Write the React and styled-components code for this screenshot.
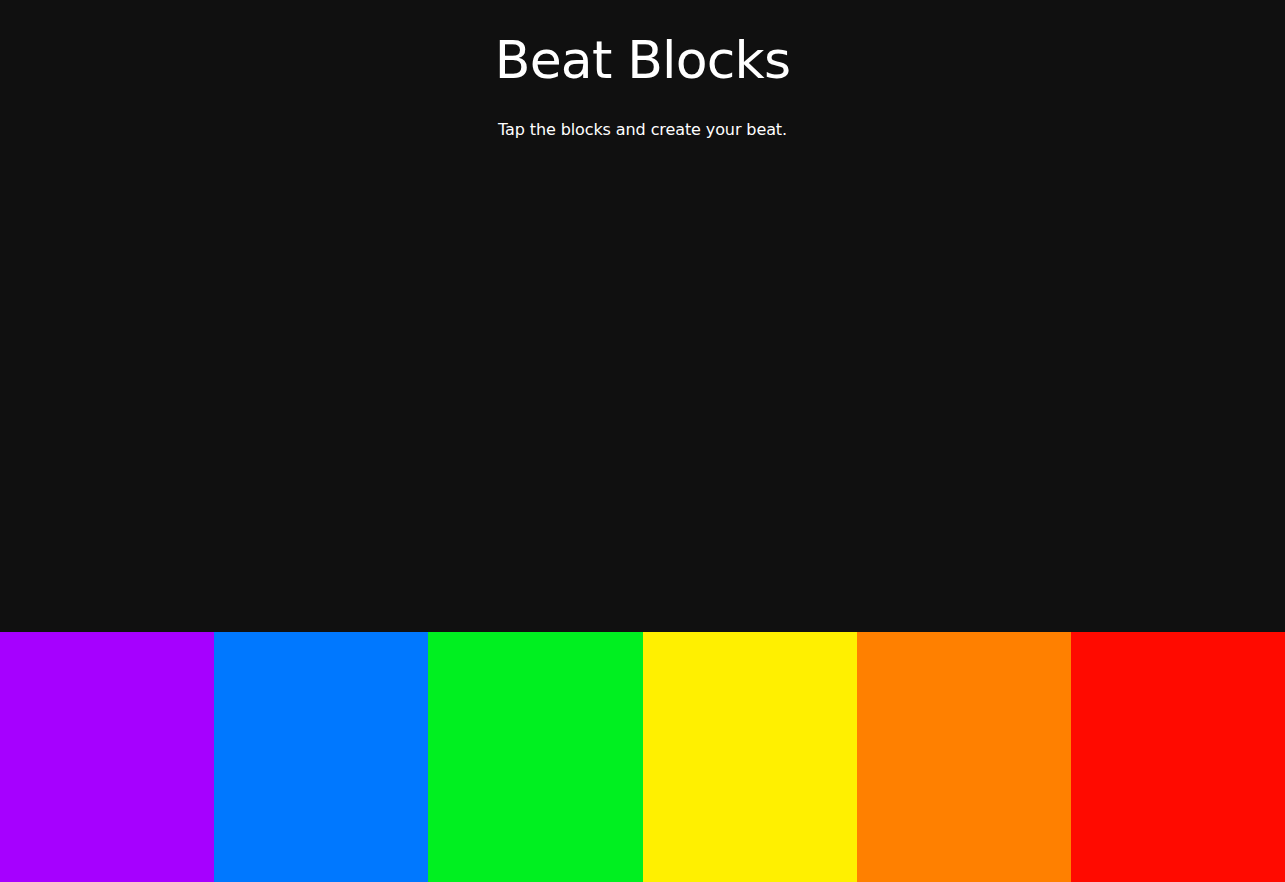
import React from 'react'
import styled, { createGlobalStyle } from 'styled-components'

const GlobalStyle = createGlobalStyle`
  html, body {
    margin: 0;
    padding: 0;
    background: #101010;
  }
  body {
    font-family: "DejaVu Sans", "Noto Sans", sans-serif;
    color: #fff;
  }
`

const Page = styled.div`
  display: flex;
  flex-direction: column;
  height: 100vh;
  overflow: hidden;
`

const Header = styled.header`
  flex: 1;
  text-align: center;
  padding-top: 28px;
`

const Title = styled.h1`
  margin: 0;
  font-size: 52px;
  font-weight: 400;
  letter-spacing: -0.8px;
  line-height: 64px;
`

const Subtitle = styled.p`
  margin: 28px 0 0;
  font-size: 16px;
  line-height: 20px;
  letter-spacing: -0.1px;
`

const Blocks = styled.div`
  display: grid;
  grid-template-columns: repeat(6, 1fr);
  height: 250px;
`

const Block = styled.div`
  background: ${props => props.color};
  cursor: pointer;
`

const colors = ['#a600ff', '#0078ff', '#00f020', '#fff000', '#ff8000', '#ff0a00']

export default function App () {
  return (
    <Page>
      <GlobalStyle />
      <Header>
        <Title>Beat Blocks</Title>
        <Subtitle>Tap the blocks and create your beat.</Subtitle>
      </Header>
      <Blocks>
        {colors.map(c => <Block key={c} color={c} />)}
      </Blocks>
    </Page>
  )
}
